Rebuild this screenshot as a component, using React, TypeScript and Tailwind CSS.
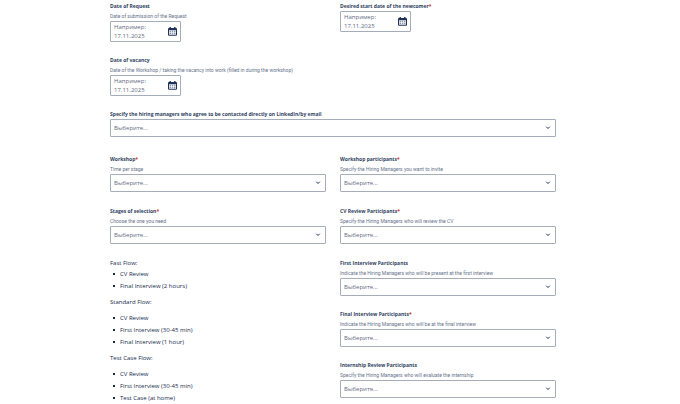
import { useState } from "react";
import type { ReactNode } from "react";

interface FieldProps {
  id: string;
  label: string;
  hint?: string;
  required?: boolean;
}

const flows = [
  { title: "Fast Flow:", steps: ["CV Review", "Final Interview (2 hours)"] },
  {
    title: "Standard Flow:",
    steps: ["CV Review", "First Interview (30-45 min)", "Final Interview (1 hour)"],
  },
  {
    title: "Test Case Flow:",
    steps: ["CV Review", "First Interview (30-45 min)", "Test Case (at home)"],
  },
];

function Field({ id, label, hint, required, children }: FieldProps & { children: ReactNode }) {
  return (
    <div className="min-w-0">
      <label
        htmlFor={id}
        className="block h-[11px] whitespace-nowrap text-[5px] leading-[12px] font-bold text-[#2f3f5f]"
      >
        {label}
        {required && <span className="text-[#d0351f]">*</span>}
      </label>
      {hint && (
        <p className="h-[10px] font-[Roboto,sans-serif] text-[5px] leading-[10px] whitespace-nowrap text-[#66728a]">
          {hint}
        </p>
      )}
      {children}
    </div>
  );
}

function CalendarIcon() {
  return (
    <svg viewBox="0 0 9 9" className="size-[9px]" aria-hidden="true">
      <path
        fill="#1f3158"
        fillRule="evenodd"
        d="M1.5 0h1.4v1h3.200V0h1.400v1H8a1 1 0 0 1 1 1v5.800a1 1 0 0 1-1 1H1a1 1 0 0 1-1-1V2a1 1 0 0 1 1-1h.5zM1 3.200v4.500h7V3.200z"
      />
      <path
        fill="#8c97ae"
        d="M1.500 3.700h1.500v1.500H1.500zM3.750 3.700h1.500v1.500h-1.500zM6 3.700h1.500v1.500H6zM1.500 5.800h1.500v1.500H1.500zM3.750 5.800h1.500v1.500h-1.500zM6 5.800h1.500v1.500H6z"
      />
    </svg>
  );
}

function DateField(props: FieldProps) {
  const [value, setValue] = useState("");

  return (
    <Field {...props}>
      <div className="flex h-[21px] w-[71px] items-center rounded-[1px] border border-[#a5adba] bg-white px-[3px]">
        <textarea
          id={props.id}
          rows={2}
          value={value}
          onChange={(e) => setValue(e.target.value)}
          placeholder="Например: 17.11.2025"
          className="h-[18px] w-10 resize-none overflow-hidden text-[6px] leading-[9px] text-[#2f3f5f] outline-none placeholder:text-[#5f6b83]"
        />
        <button type="button" aria-label="Выбрать дату" className="ml-auto">
          <CalendarIcon />
        </button>
      </div>
    </Field>
  );
}

function SelectField(props: FieldProps) {
  return (
    <Field {...props}>
      <div className="relative">
        <select
          id={props.id}
          className="block h-[18px] w-full appearance-none rounded-[1px] border border-[#a5adba] bg-white px-[3px] text-[6px] leading-4 text-[#5f6b83]"
        >
          <option>Выберите...</option>
        </select>
        <svg
          viewBox="0 0 6 4"
          className="pointer-events-none absolute top-[7px] right-[5px] h-1 w-[6px]"
          aria-hidden="true"
        >
          <path d="M1.500 1 3 2.500 4.500 1" fill="none" stroke="#22335a" strokeWidth="1" strokeLinecap="round" />
        </svg>
      </div>
    </Field>
  );
}

export default function App() {
  return (
    <main className="bg-white pr-[14px] font-['Open_Sans','Noto_Sans',sans-serif]">
      <form className="mx-auto w-full max-w-[446px]">
        <div className="mb-3 grid grid-cols-2 gap-x-[14px]">
          <DateField id="request-date" label="Date of Request" hint="Date of submission of the Request" />
          <DateField id="start-date" label="Desired start date of the newcomer" required />
        </div>
        <div className="mb-3">
          <DateField
            id="vacancy-date"
            label="Date of vacancy"
            hint="Date of the Workshop / taking the vacancy into work (filled in during the workshop)"
          />
        </div>
        <div className="mb-4">
          <SelectField
            id="contacts"
            label="Specify the hiring managers who agree to be contacted directly on LinkedIn/by email"
          />
        </div>

        <div className="mb-[13px] grid grid-cols-2 gap-x-[14px] gap-y-[13px]">
          <SelectField id="workshop" label="Workshop" hint="Time per stage" required />
          <SelectField
            id="workshop-participants"
            label="Workshop participants"
            hint="Specify the Hiring Managers you want to invite"
            required
          />
          <SelectField id="stages" label="Stages of selection" hint="Choose the one you need" required />
          <SelectField
            id="cv-participants"
            label="CV Review Participants"
            hint="Specify the Hiring Managers who will review the CV"
            required
          />
        </div>

        <div className="grid grid-cols-2 gap-x-[14px]">
          <div className="text-[6px] text-[#172b4d]">
            {flows.map((flow, i) => (
              <section key={flow.title}>
                <p className={i === 0 ? "pt-px leading-[10px]" : "py-1 leading-[12px]"}>{flow.title}</p>
                <ul className="pl-[3px] leading-[12px]">
                  {flow.steps.map((step) => (
                    <li
                      key={step}
                      className="flex items-center gap-[5px] before:size-[2px] before:bg-[#172b4d]"
                    >
                      {step}
                    </li>
                  ))}
                </ul>
              </section>
            ))}
          </div>
          <div className="flex flex-col gap-3">
            <SelectField
              id="first-interview"
              label="First Interview Participants"
              hint="Indicate the Hiring Managers who will be present at the first interview"
            />
            <SelectField
              id="final-interview"
              label="Final Interview Participants"
              hint="Indicate the Hiring Managers who will be at the final interview"
              required
            />
            <SelectField
              id="internship"
              label="Internship Review Participants"
              hint="Specify the Hiring Managers who will evaluate the internship"
            />
          </div>
        </div>
      </form>
    </main>
  );
}
